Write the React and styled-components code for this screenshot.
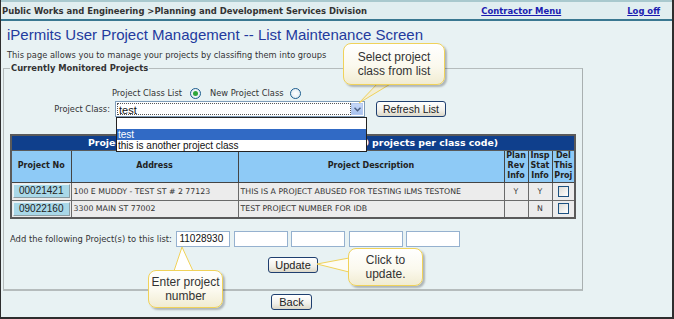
import React from "react";
import styled, { createGlobalStyle } from "styled-components";

const Global = createGlobalStyle`
  body { margin: 0; background: #e8f2f3; }
  * { box-sizing: border-box; }
`;

const VERDANA = `"DejaVu Sans", Verdana, sans-serif`;
const ARIAL = `"Liberation Sans", Arial, sans-serif`;

const Page = styled.div`
  position: relative;
  width: 674px;
  height: 319px;
  background: #e8f2f3;
  border-left: 1px solid #2e2e2e;
  border-right: 2px solid #2e2e2e;
  border-bottom: 2px solid #2e2e2e;
  overflow: hidden;
  font-family: ${VERDANA};
  color: #333;
`;

const Header = styled.div`
  height: 21px;
  display: flex;
  align-items: center;
  background: #e1eef0;
  border-top: 2px solid #a9c9ce;
  border-bottom: 2px solid #3a7891;
  padding-left: 1px;
  font: bold 8.45px ${VERDANA};
  color: #333;
`;

const Crumb = styled.span`
  flex: 1;
  white-space: nowrap;
`;

const HeadLink = styled.a`
  color: #1b1bb0;
  text-decoration: underline;
  margin-right: ${(p) => p.$mr}px;
  white-space: nowrap;
`;

const Content = styled.div`
  padding: 0 0 0 2px;
`;

const Title = styled.h1`
  margin: 5px 0 0 4px;
  font: 15px/18px ${ARIAL};
  color: #233a9e;
`;

const Intro = styled.p`
  margin: 5px 0 0 4px;
  font: 8.3px/12px ${VERDANA};
  color: #333;
`;

const Fieldset = styled.fieldset`
  width: 577px;
  margin: 2px 0 0 0;
  padding: 0 6px 16px 6px;
  border: 1px solid #b5bcbc;
  border-bottom-width: 2px;
  border-right-color: #a9b0b0;
`;

const Legend = styled.legend`
  padding: 0 1px;
  margin-left: 0;
  font: bold 8.4px/10px ${VERDANA};
  color: #333;
`;

const RadioRow = styled.div`
  display: flex;
  align-items: center;
  height: 14px;
  margin: 13px 0 0 102px;
  font: 8.3px ${VERDANA};
`;

const RadioLabel = styled.span`
  margin-right: ${(p) => p.$mr}px;
`;

const Radio = styled.span`
  width: 11px;
  height: 11px;
  border-radius: 50%;
  border: 1px solid #1c5d8e;
  background: radial-gradient(circle, #ffffff 0%, #dce8ef 100%);
  display: inline-flex;
  align-items: center;
  justify-content: center;
  margin-right: ${(p) => p.$mr}px;
  &::after {
    content: "";
    width: 5px;
    height: 5px;
    border-radius: 50%;
    background: ${(p) => (p.$on ? "#2ea63a" : "transparent")};
  }
`;

const SelectRow = styled.div`
  display: flex;
  align-items: center;
  height: 16px;
  margin-top: 1px;
  font: 8.3px ${VERDANA};
`;

const SelectLabel = styled.span`
  width: 100px;
  text-align: right;
  margin-right: 5px;
  white-space: nowrap;
`;

const SelectBox = styled.div`
  width: 250px;
  height: 16px;
  background: #fff;
  border: 1px solid #7f9db9;
  display: flex;
  align-items: stretch;
  padding: 1px;
`;

const SelectValue = styled.div`
  flex: 1;
  border: 1px dotted #555;
  font: 11px/12px ${ARIAL};
  color: #111;
  padding-left: 1px;
`;

const SelectArrow = styled.div`
  width: 12px;
  background: linear-gradient(#c6d8f8, #a8c2ef);
  border: 1px solid #b5c9ef;
  display: flex;
  align-items: center;
  justify-content: center;
`;

const XPButton = styled.button`
  height: 16px;
  padding: 0 ${(p) => p.$px || 6}px;
  margin-left: ${(p) => p.$ml || 0}px;
  border: 1px solid #1f3f6f;
  border-radius: 3px;
  background: linear-gradient(#ffffff 0%, #f1f0ea 60%, #dcd8c8 100%);
  font: ${(p) => p.$fs || 11}px/12px ${ARIAL};
  color: #222;
`;

const Table = styled.table`
  margin-top: 17px;
  width: 564px;
  border-collapse: collapse;
  table-layout: fixed;
  border: 2px solid #5a5a5a;
`;

const TitleCell = styled.th`
  height: 15px;
  background: #0f3f8c;
  color: #fff;
  font: bold 9.4px/12px ${VERDANA};
  text-align: center;
  white-space: nowrap;
  overflow: hidden;
  border: 1px solid #5a5a5a;
  padding: 0;
`;

const HeadCell = styled.th`
  height: 32px;
  background: #8ecaf6;
  font: bold 8px/10px ${VERDANA};
  color: #222;
  border: 1px solid #444;
  padding: 0;
  text-align: center;
`;

const Cell = styled.td`
  height: 18px;
  background: #ececec;
  border: 1px solid #6a6a6a;
  font: 7.8px ${VERDANA};
  color: #333;
  padding: 0 ${(p) => (p.$center ? 0 : 2)}px;
  text-align: ${(p) => (p.$center ? "center" : "left")};
  white-space: nowrap;
  overflow: hidden;
`;

const ProjButton = styled.span`
  display: block;
  margin: 0 1px;
  height: 14px;
  background: #a9d8e8;
  border: 1px solid #8d9da3;
  border-top-color: #e8f4f8;
  border-left-color: #e8f4f8;
  font: 10px/12px ${ARIAL};
  color: #222;
  text-align: center;
`;

const Check = styled.span`
  display: inline-block;
  width: 11px;
  height: 11px;
  border: 1px solid #1c5180;
  background: linear-gradient(135deg, #dcdcd6, #ffffff);
  vertical-align: middle;
`;

const AddRow = styled.div`
  display: flex;
  align-items: center;
  gap: 3.5px;
  margin-top: 12px;
  height: 16px;
  font: 8.4px ${VERDANA};
`;

const AddLabel = styled.span`
  margin-right: 1px;
  white-space: nowrap;
`;

const NumInput = styled.div`
  width: 54px;
  height: 16px;
  background: #fff;
  border: 1px solid #95b1cf;
  font: 10px/14px ${ARIAL};
  color: #111;
  padding-left: 2px;
`;

const Centered = styled.div`
  display: flex;
  justify-content: center;
  width: ${(p) => p.$w || "auto"};
  margin-top: ${(p) => p.$mt}px;
`;

const Dropdown = styled.div`
  position: absolute;
  left: 115px;
  top: 117px;
  width: 251px;
  background: #fff;
  border: 1px solid #222;
  font: 10px/11px ${ARIAL};
  color: #111;
`;

const Option = styled.div`
  height: 11px;
  padding-left: 1px;
  background: ${(p) => (p.$sel ? "#316ac5" : "#fff")};
  color: ${(p) => (p.$sel ? "#fff" : "#111")};
`;

const Callout = styled.div`
  position: absolute;
  left: ${(p) => p.$x}px;
  top: ${(p) => p.$y}px;
  width: ${(p) => p.$w}px;
  height: ${(p) => p.$h}px;
  border: 1px solid #f0d25a;
  border-radius: 8px;
  background: linear-gradient(#ffffff 0%, #fbf9ee 55%, #f1ecd2 100%);
  box-shadow: 2px 2px 2px rgba(0, 0, 0, 0.25);
  display: flex;
  align-items: center;
  justify-content: center;
  text-align: center;
  font: 12px/14px ${ARIAL};
  color: #333;
`;

const Tail = styled.svg`
  position: absolute;
  left: ${(p) => p.$x}px;
  top: ${(p) => p.$y}px;
  overflow: visible;
`;

export default function App() {
  return (
    <>
      <Global />
      <Page>
        <Header>
          <Crumb>Public Works and Engineering &gt;Planning and Development Services Division</Crumb>
          <HeadLink $mr={66}>Contractor Menu</HeadLink>
          <HeadLink $mr={12}>Log off</HeadLink>
        </Header>
        <Content>
          <Title>iPermits User Project Management -- List Maintenance Screen</Title>
          <Intro>This page allows you to manage your projects by classifing them into groups</Intro>
          <Fieldset>
            <Legend>Currently Monitored Projects</Legend>
            <RadioRow>
              <RadioLabel $mr={8}>Project Class List</RadioLabel>
              <Radio $on $mr={9} />
              <RadioLabel $mr={6}>New Project Class</RadioLabel>
              <Radio />
            </RadioRow>
            <SelectRow>
              <SelectLabel>Project Class:</SelectLabel>
              <SelectBox>
                <SelectValue>test</SelectValue>
                <SelectArrow>
                  <svg width="7" height="5" viewBox="0 0 7 5">
                    <path d="M0.5 0.8 L3.5 3.8 L6.5 0.8" fill="none" stroke="#4d6185" strokeWidth="1.5" />
                  </svg>
                </SelectArrow>
              </SelectBox>
              <XPButton $ml={11} $px={6} $fs={10.5}>Refresh List</XPButton>
            </SelectRow>
            <Table>
              <colgroup>
                <col style={{ width: 60 }} />
                <col style={{ width: 167 }} />
                <col style={{ width: 266 }} />
                <col style={{ width: 24 }} />
                <col style={{ width: 24 }} />
                <col style={{ width: 23 }} />
              </colgroup>
              <thead>
                <tr>
                  <TitleCell colSpan={6}>Projects Assigned to This Project Class (maximum 50 projects per class code)</TitleCell>
                </tr>
                <tr>
                  <HeadCell>Project No</HeadCell>
                  <HeadCell>Address</HeadCell>
                  <HeadCell>Project Description</HeadCell>
                  <HeadCell>Plan Rev Info</HeadCell>
                  <HeadCell>Insp Stat Info</HeadCell>
                  <HeadCell>Del This Proj</HeadCell>
                </tr>
              </thead>
              <tbody>
                <tr>
                  <Cell $center><ProjButton>00021421</ProjButton></Cell>
                  <Cell>100 E MUDDY - TEST ST # 2 77123</Cell>
                  <Cell>THIS IS A PROJECT ABUSED FOR TESTING ILMS TESTONE</Cell>
                  <Cell $center>Y</Cell>
                  <Cell $center>Y</Cell>
                  <Cell $center><Check /></Cell>
                </tr>
                <tr>
                  <Cell $center><ProjButton>09022160</ProjButton></Cell>
                  <Cell>3300 MAIN ST 77002</Cell>
                  <Cell>TEST PROJECT NUMBER FOR IDB</Cell>
                  <Cell $center></Cell>
                  <Cell $center>N</Cell>
                  <Cell $center><Check /></Cell>
                </tr>
              </tbody>
            </Table>
            <AddRow>
              <AddLabel>Add the following Project(s) to this list:</AddLabel>
              <NumInput>11028930</NumInput>
              <NumInput />
              <NumInput />
              <NumInput />
              <NumInput />
            </AddRow>
            <Centered $mt={10}>
              <XPButton $px={6}>Update</XPButton>
            </Centered>
          </Fieldset>
          <Centered $w="577px" $mt={3}>
            <XPButton $px={7}>Back</XPButton>
          </Centered>
        </Content>

        <Dropdown>
          <Option />
          <Option $sel>test</Option>
          <Option>this is another project class</Option>
        </Dropdown>

        <Tail $x={357} $y={83} width="40" height="21">
          <path d="M20 0 L1 20 L34 0" fill="#f2eed6" stroke="#f0d25a" strokeWidth="1" />
        </Tail>
        <Callout $x={342} $y={43} $w={102} $h={42}>
          Select project
          <br />
          class from list
        </Callout>

        <Tail $x={170} $y={246} width="25" height="26">
          <path d="M3 25 L11 1 L22 25" fill="#ffffff" stroke="#f0d25a" strokeWidth="1" />
        </Tail>
        <Callout $x={147} $y={270} $w={75} $h={38}>
          Enter project
          <br />
          number
        </Callout>

        <Tail $x={315} $y={256} width="34" height="18">
          <path d="M33 2 L1 8 L33 16" fill="#fdfcf5" stroke="#f0d25a" strokeWidth="1" />
        </Tail>
        <Callout $x={347} $y={248} $w={75} $h={38}>
          Click to
          <br />
          update.
        </Callout>
      </Page>
    </>
  );
}
